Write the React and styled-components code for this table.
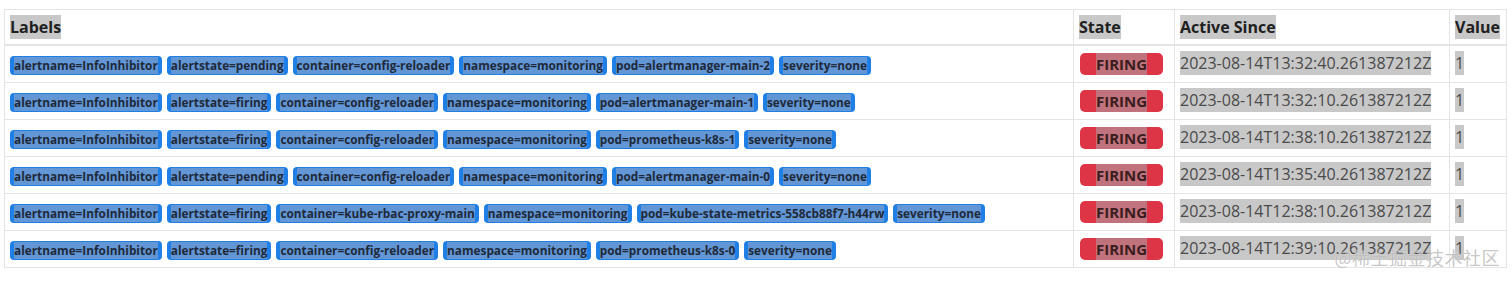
import React from 'react';
import styled, { createGlobalStyle } from 'styled-components';

const GlobalStyle = createGlobalStyle`
  body {
    margin: 0;
    background: #ffffff;
    font-family: "Open Sans", "Noto Sans", sans-serif;
    color: #212529;
  }
`;

const Page = styled.div`
  position: relative;
  padding: 9px 5px 0 4px;
  height: 283px;
  box-sizing: border-box;
  overflow: hidden;
`;

const Table = styled.table`
  width: 100%;
  border-collapse: collapse;
  border: 1px solid #e3e4e6;
`;

const Th = styled.th`
  text-align: left;
  font-size: 16px;
  font-weight: 700;
  padding: 5px 5px 5px 5px;
  border: 1px solid #e3e4e6;
  border-bottom-width: 2px;
  width: ${(p) => p.w || 'auto'};
  white-space: nowrap;
`;

const Td = styled.td`
  font-size: 16px;
  padding: 5px 5px 7px 5px;
  border: 1px solid #e3e4e6;
  vertical-align: middle;
  white-space: nowrap;
  height: 24px;
`;

const Sel = styled.span`
  display: inline-block;
  line-height: 24px;
  background: #c8c8c8;
  color: ${(p) => (p.light ? '#4a4a4a' : '#202020')};
  font-weight: ${(p) => (p.light ? 400 : 700)};
`;

const Badge = styled.span`
  display: inline-block;
  vertical-align: middle;
  margin: 2px 5px 0 0;
  padding: 1px 4px;
  border-radius: 4px;
  background: ${(p) => p.edge};
`;

const BadgeText = styled.span`
  display: block;
  background: ${(p) => p.fill};
  color: ${(p) => p.ink};
  font-size: ${(p) => p.size};
  font-weight: 700;
  line-height: ${(p) => p.lh};
`;

const LabelBadge = ({ children }) => (
  <Badge edge="#1f7fe6">
    <BadgeText fill="#6396d5" ink="#1e2a3a" size="11.8px" lh="17px">
      {children}
    </BadgeText>
  </Badge>
);

const StateBadge = styled(Badge)`
  padding: 0 16px;
  margin: 0 0 0 1px;
  border-radius: 5px;
`;

const Watermark = styled.div`
  position: absolute;
  right: 12px;
  bottom: 13px;
  font-size: 18px;
  font-family: "Noto Sans CJK SC", sans-serif;
  color: rgba(150, 150, 150, 0.55);
  text-shadow: 0 0 1px rgba(255, 255, 255, 0.8);
  letter-spacing: 0.5px;
`;

const rows = [
  {
    labels: ['alertname=InfoInhibitor', 'alertstate=pending', 'container=config-reloader', 'namespace=monitoring', 'pod=alertmanager-main-2', 'severity=none'],
    since: '2023-08-14T13:32:40.261387212Z',
  },
  {
    labels: ['alertname=InfoInhibitor', 'alertstate=firing', 'container=config-reloader', 'namespace=monitoring', 'pod=alertmanager-main-1', 'severity=none'],
    since: '2023-08-14T13:32:10.261387212Z',
  },
  {
    labels: ['alertname=InfoInhibitor', 'alertstate=firing', 'container=config-reloader', 'namespace=monitoring', 'pod=prometheus-k8s-1', 'severity=none'],
    since: '2023-08-14T12:38:10.261387212Z',
  },
  {
    labels: ['alertname=InfoInhibitor', 'alertstate=pending', 'container=config-reloader', 'namespace=monitoring', 'pod=alertmanager-main-0', 'severity=none'],
    since: '2023-08-14T13:35:40.261387212Z',
  },
  {
    labels: ['alertname=InfoInhibitor', 'alertstate=firing', 'container=kube-rbac-proxy-main', 'namespace=monitoring', 'pod=kube-state-metrics-558cb88f7-h44rw', 'severity=none'],
    since: '2023-08-14T12:38:10.261387212Z',
  },
  {
    labels: ['alertname=InfoInhibitor', 'alertstate=firing', 'container=config-reloader', 'namespace=monitoring', 'pod=prometheus-k8s-0', 'severity=none'],
    since: '2023-08-14T12:39:10.261387212Z',
  },
];

const App = () => (
  <Page>
    <GlobalStyle />
    <Table>
      <thead>
        <tr>
          <Th><Sel>Labels</Sel></Th>
          <Th w="90px"><Sel>State</Sel></Th>
          <Th w="264px"><Sel>Active Since</Sel></Th>
          <Th w="46px"><Sel>Value</Sel></Th>
        </tr>
      </thead>
      <tbody>
        {rows.map((r, i) => (
          <tr key={i}>
            <Td>
              {r.labels.map((l) => (
                <LabelBadge key={l}>{l}</LabelBadge>
              ))}
            </Td>
            <Td>
              <StateBadge edge="#dd3545">
                <BadgeText fill="#c0737c" ink="#3b1c20" size="15px" lh="22px">
                  FIRING
                </BadgeText>
              </StateBadge>
            </Td>
            <Td>
              <Sel light>{r.since}</Sel>
            </Td>
            <Td>
              <Sel light>1</Sel>
            </Td>
          </tr>
        ))}
      </tbody>
    </Table>
    <Watermark>@稀土掘金技术社区</Watermark>
  </Page>
);

export default App;
